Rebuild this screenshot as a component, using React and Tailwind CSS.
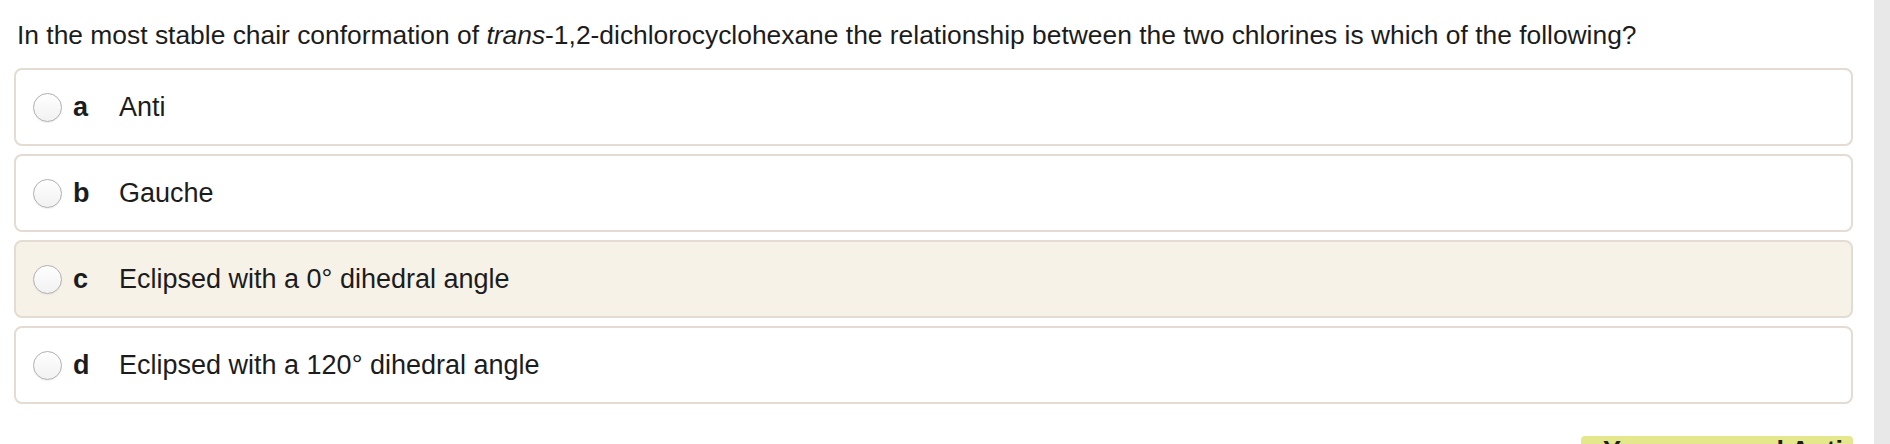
const options = [
  { key: "a", label: "Anti" },
  { key: "b", label: "Gauche" },
  { key: "c", label: "Eclipsed with a 0° dihedral angle", hover: true },
  { key: "d", label: "Eclipsed with a 120° dihedral angle" },
];

const Radio = () => (
  <div className="w-[29px] h-[29px] shrink-0 rounded-full border border-[#b0b0b0] bg-linear-to-b from-white to-[#f1f1f1] shadow-[0_1px_1px_rgba(0,0,0,0.06)]" />
);

const OptionRow = ({ option }) => {
  return (
    <div
      className={`flex items-center h-[78px] pl-[17px] rounded-lg border-2 border-[#e4dbd2] ${
        option.hover ? "bg-[#f7f2e8]" : "bg-white"
      }`}
    >
      <Radio />
      <div className="ml-[11px] w-[46px] text-[27px] leading-[30px] font-bold text-[#1c1c1c]">{option.key}</div>
      <div className="text-[27px] leading-[30px] text-[#1c1c1c]">{option.label}</div>
    </div>
  );
};

export default function App() {
  return (
    <div className="flex w-[1890px] h-[444px] overflow-hidden bg-white font-['Liberation_Sans',Arial,sans-serif]">
      <div className="flex-1 flex flex-col pl-[14px] pr-[21px] pt-[20px]">
        <p className="pl-[3px] text-[26.4px] leading-[30px] text-[#1c1c1c] whitespace-nowrap">
          In the most stable chair conformation of <i>trans</i>-1,2-dichlorocyclohexane the relationship between
          the two chlorines is which of the following?
        </p>
        <div className="mt-[18px] flex flex-col gap-2">
          {options.map((option) => (
            <OptionRow key={option.key} option={option} />
          ))}
        </div>
        <div className="mt-[32px] flex justify-end">
          <div className="w-[272px] h-[40px] pl-[22px] rounded-t bg-[#e4e78b] text-[27px] leading-[30px] font-bold text-[#1c1c1c]">
            You answered Anti
          </div>
        </div>
      </div>
      <div className="w-[16px] bg-[#e8e8e8]" />
    </div>
  );
}
